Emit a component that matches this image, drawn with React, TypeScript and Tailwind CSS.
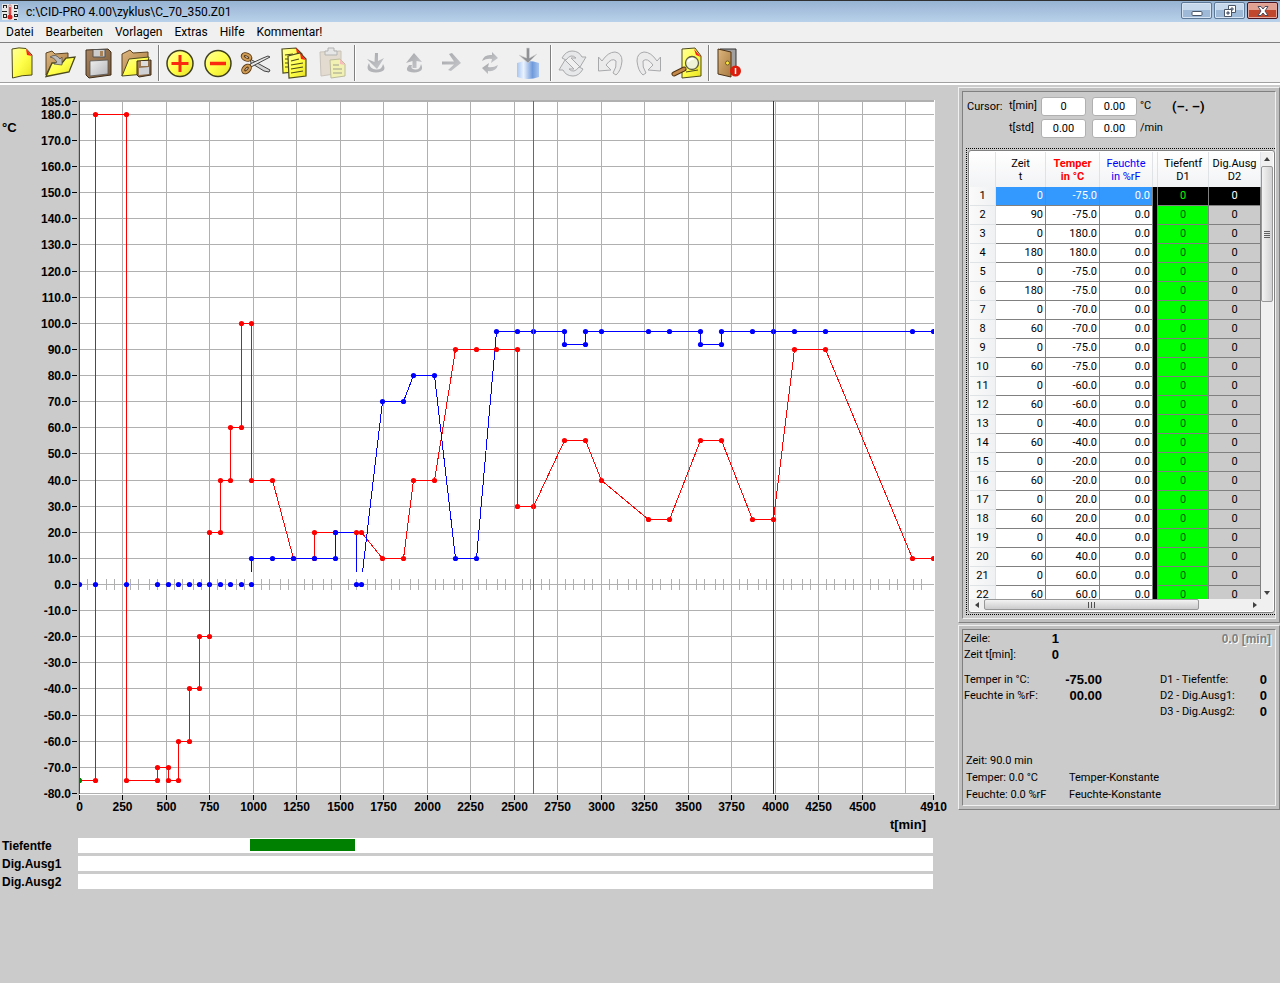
import React from 'react';

type Point = [number, number];

const MAX_T = 4910;

const temperature: Point[] = [
  [0, -75], [90, -75], [90, 180], [270, 180], [270, -75], [450, -75], [450, -70], [510, -70], [510, -75],
  [570, -75], [570, -60], [630, -60], [630, -40], [690, -40], [690, -20], [750, -20], [750, 20], [810, 20],
  [810, 40], [870, 40], [870, 60], [930, 60], [930, 100], [990, 100], [990, 40], [1110, 40], [1230, 10],
  [1350, 10], [1350, 20], [1470, 20], [1590, 20], [1620, 20], [1740, 10], [1860, 10], [1920, 40], [2040, 40],
  [2160, 90], [2280, 90], [2400, 90], [2520, 90], [2520, 30], [2610, 30], [2790, 55], [2910, 55], [3000, 40],
  [3270, 25], [3390, 25], [3570, 55], [3690, 55], [3870, 25], [3990, 25], [4110, 90], [4290, 90], [4790, 10],
  [4910, 10],
];

// humidity is only controlled above 5 %, so the curve comes in two pieces
const humidityA: Point[] = [[990, 10], [1110, 10], [1230, 10], [1350, 10], [1470, 10], [1470, 20]];
const humidityB: Point[] = [
  [1740, 70], [1860, 70], [1920, 80], [2040, 80], [2160, 10], [2280, 10], [2400, 97], [2520, 97], [2610, 97],
  [2790, 97], [2790, 92], [2910, 92], [2910, 97], [3000, 97], [3270, 97], [3390, 97], [3570, 97], [3570, 92],
  [3690, 92], [3690, 97], [3870, 97], [3990, 97], [4110, 97], [4290, 97], [4790, 97], [4910, 97],
];
const humidityOff: Point[] = [
  0, 90, 270, 450, 510, 570, 630, 690, 750, 810, 870, 930, 990, 1590, 1620,
].map((t) => [t, 0]);

const rows: [number, number][] = [
  [0, -75], [90, -75], [0, 180], [180, 180], [0, -75], [180, -75], [0, -70], [60, -70], [0, -75], [60, -75],
  [0, -60], [60, -60], [0, -40], [60, -40], [0, -20], [60, -20], [0, 20], [60, 20], [0, 40], [60, 40],
  [0, 60], [60, 60],
];

const tracks = [
  { name: 'Tiefentfe', on: [990, 1590] },
  { name: 'Dig.Ausg1', on: null },
  { name: 'Dig.Ausg2', on: null },
];

const px = (t: number) => Math.round(79 + (t * 854) / MAX_T) + 0.5;
const py = (v: number) => Math.round(498 - v * 2.612) + 0.5;
const toPath = (pts: Point[]) => pts.map(([t, v]) => `${px(t)},${py(v)}`).join(' ');

function Dots({ points, color }: { points: Point[]; color: string }) {
  return (
    <g fill={color} clipPath="url(#plot)">
      {points.map(([t, v], i) => (
        <circle key={i} cx={px(t)} cy={py(v)} r={2.6} />
      ))}
    </g>
  );
}

function Chart() {
  const yTicks = [185, 180];
  for (let v = 170; v >= -80; v -= 10) yTicks.push(v);
  const xGrid: number[] = [];
  for (let t = 250; t <= 4750; t += 250) xGrid.push(t);
  const xTicks = [0, ...xGrid.filter((t) => t < 4750), MAX_T];

  return (
    <svg
      viewBox="0 0 958 750"
      className="block h-auto w-full font-['Liberation_Sans',Arial,sans-serif] text-[12px] font-bold"
      role="img"
      aria-label="Temperatur und Feuchte"
    >
      <clipPath id="plot"><rect x="79" y="14" width="855" height="695" /></clipPath>
      <rect x="78" y="14" width="857" height="695" fill="#fff" />
      <g stroke="#b0b0b0" shapeRendering="crispEdges">
        {yTicks.map((v) => <line key={v} x1="79" x2="934" y1={py(v)} y2={py(v)} />)}
        {xGrid.map((t) => <line key={t} x1={px(t)} x2={px(t)} y1="15" y2="708" />)}
        {[0, ...xGrid.slice(0, -1), 4750].map((t) =>
          [8, 16, 27, 35].filter((d) => px(t) + d < 925).map((d) => (
            <line key={`${t}-${d}`} x1={px(t) + d} x2={px(t) + d} y1="493" y2="504" />
          )),
        )}
        <line x1="78" x2="934" y1="14.5" y2="14.5" />
        <line x1="78.5" x2="78.5" y1="14" y2="709" />
      </g>
      <g stroke="#000" shapeRendering="crispEdges">
        {yTicks.map((v) => <line key={v} x1="72" x2="77" y1={py(v)} y2={py(v)} />)}
        {xTicks.map((t) => <line key={t} x1={px(t)} x2={px(t)} y1="709" y2="714" />)}
      </g>
      <g textAnchor="end">
        {yTicks.map((v) => <text key={v} x="71" y={py(v) + 4}>{v.toFixed(1)}</text>)}
      </g>
      <g textAnchor="middle">
        {xTicks.map((t) => <text key={t} x={px(t)} y="725">{t}</text>)}
      </g>
      <text x="2" y="46" className="text-[13px]">°C</text>
      <text x="926" y="743" textAnchor="end" className="text-[13px]">t[min]</text>

      <g fill="none" shapeRendering="crispEdges">
        <line x1="79.5" x2="79.5" y1="15" y2="708" stroke="#008000" />
        <polyline points={toPath(temperature)} stroke="#f00" />
        <polyline points={`${px(990)},486 ${toPath(humidityA)} ${px(1590)},${py(20)} ${px(1590)},486`} stroke="#00f" />
        <polyline points={`362.5,486 ${toPath(humidityB)}`} stroke="#00f" />
      </g>
      <Dots points={temperature} color="#f00" />
      <Dots points={[...humidityA, ...humidityB, ...humidityOff]} color="#00f" />
      <rect x="79" y={py(-75) - 2.5} width="2" height="5" fill="#008000" />
      <g shapeRendering="crispEdges">
        <line x1={px(2610)} x2={px(2610)} y1="15" y2="708" stroke="#f0f" />
        <line x1={px(3990)} x2={px(3990)} y1="15" y2="708" stroke="#800080" />
      </g>
    </svg>
  );
}

/* ---------- toolbar icons, all drawn on a 38x40 cell ---------- */

const ink = '#4c4a1c';

const icons: Record<string, React.ReactNode> = {
  new: (
    <>
      <path d="M9 6 Q16 4 23 5.500 L29 12 V32 Q19 32 9.500 35 Z" fill="url(#yellow)" stroke={ink} />
      <path d="M23 6 L29 13 L24 12 Z" fill="#f22" />
    </>
  ),
  open: (
    <>
      <path d="M5 32 V10 L11 8 L14 11 L27 10 V18 L10 22 Z" fill="url(#tan)" stroke="#5b4323" />
      <path d="M5 33.500 L11 20 L21 20 L25 15 L34 14 L28 29 Z" fill="url(#yellow)" stroke={ink} strokeWidth="1.300" />
      <path d="M9 14 Q15 10 19 16 L21 14 L21 22 L13 21 L16 19 Q13 14 9 14 Z" fill="#bbb" stroke="#555" strokeWidth=".8" />
    </>
  ),
  save: (
    <>
      <path d="M7 7 L29 6 L32 9 V32 L10 35 L7 32 Z" fill="url(#brown)" stroke="#3d2d1b" />
      <path d="M14 6.500 H26 V14 H14 Z" fill="#ccc" stroke="#555" />
      <rect x="21" y="8" width="3" height="5" fill="#a8835a" />
      <path d="M11 18 L29 17 V31 L11 33 Z" fill="url(#silver)" stroke="#555" strokeWidth=".8" />
    </>
  ),
  saveAs: (
    <>
      <path d="M5 33 V11 L13 7 L16 10 L31 9 V18 L12 22 Z" fill="url(#tan)" stroke="#5b4323" />
      <path d="M5 33 L12 16 L32 14 L28 31 Z" fill="url(#yellow)" stroke={ink} />
      <path d="M20 18 L34 17 V32 L22 34 L20 32 Z" fill="url(#brown)" stroke="#3d2d1b" />
      <rect x="24" y="18" width="7" height="5" fill="#ddd" />
      <path d="M22 25 L32 24 V31 L22 32 Z" fill="#cfd1d4" />
    </>
  ),
  add: (
    <>
      <circle cx="19" cy="20.500" r="13" fill="url(#yellow)" stroke="#3f3f20" strokeWidth="1.500" />
      <path d="M10.500 20.500 H27.500 M19 12 V29" stroke="#fa2a10" strokeWidth="3" />
    </>
  ),
  remove: (
    <>
      <circle cx="19" cy="20.500" r="13" fill="url(#yellow)" stroke="#3f3f20" strokeWidth="1.500" />
      <path d="M11 20.500 H27" stroke="#fa2a10" strokeWidth="3.500" />
    </>
  ),
  cut: (
    <>
      <path d="M13 16 L33 27 L32 29 L27 28 L14 20 Z" fill="#d4d4d4" stroke="#444" />
      <path d="M14 24 L33 14 L31 13 L26 15 L13 21 Z" fill="#e6e6e6" stroke="#444" />
      <g fill="none" stroke="#5b3a16" strokeWidth="4">
        <ellipse cx="9.500" cy="14" rx="4" ry="2.500" transform="rotate(25 9.500 14)" />
        <ellipse cx="9.500" cy="26" rx="4" ry="2.500" transform="rotate(-45 9.500 26)" />
      </g>
      <g fill="none" stroke="#cf9c55" strokeWidth="2">
        <ellipse cx="9.500" cy="14" rx="4" ry="2.500" transform="rotate(25 9.500 14)" />
        <ellipse cx="9.500" cy="26" rx="4" ry="2.500" transform="rotate(-45 9.500 26)" />
      </g>
    </>
  ),
  copy: (
    <>
      <path d="M7 6 L21 5 L27 11 V28 L8 30 Z" fill="url(#yellow)" stroke={ink} strokeWidth="1.200" />
      <path d="M21 5 L27 12 L22 11 Z" fill="#f22" />
      <path d="M10 12 L18 11 M10 16 H13 M10 20 H13 M10 24 H13" stroke={ink} strokeWidth="1.200" />
      <path d="M13 13 L25 10 L31 16 V33 L14 35 Z" fill="url(#yellow)" stroke={ink} strokeWidth="1.200" />
      <path d="M25 10 L31 17 L26 16 Z" fill="#f22" />
      <path d="M16 18 L24 16 M16 22 L28 20 M16 26 L28 24 M16 30 L28 28" stroke={ink} strokeWidth="1.200" />
    </>
  ),
  paste: (
    <g opacity=".5">
      <path d="M7 9 L28 8 V30 L8 33 Z" fill="#d8c8b0" stroke="#a39684" />
      <path d="M12 12 V8 H15 V5 H21 V8 H24 V12 Z" fill="#ddd" stroke="#777" />
      <path d="M17 17 L27 16 L32 21 V33 L18 35 Z" fill="#f2f27a" stroke="#8a8a4a" />
      <path d="M27 16 L32 22 L27 21 Z" fill="#f88" />
      <path d="M20 22 H26 M20 26 H29 M20 30 H29" stroke="#8a8a4a" strokeWidth="1.300" />
    </g>
  ),
  loadDown: (
    <>
      <path d="M12 20 Q7 29 19 29.500 Q31 29 26 21 Q25 27 19 26.500 Q13 26 12 20 Z" fill="#b3b4b8" />
      <path d="M18 10 H21 V18 L27 15 L20 26 L10 16 L17.500 19 Z" fill="url(#gray)" />
    </>
  ),
  loadUp: (
    <>
      <path d="M14 22 Q8 29 19 29.500 Q30 29 26 21 Q25 27 20 26.500 Q15 26 17 22 Z" fill="#b3b4b8" />
      <path d="M19 10 L27 19 L21.500 18 V25 H17.500 V18 L11 20 Z" fill="url(#gray)" />
    </>
  ),
  next: <path d="M9 18.500 H21 L16 11 L19 10 L28 20 L18 28 L15 27 L21 21.500 H9 Z" fill="url(#gray)" />,
  cycle: (
    <>
      <path d="M11 18 Q13 11 21 12 V9 L27 15 L20 20 L21 16 Q16 15 11 18 Z" fill="url(#gray)" />
      <path d="M27 22 Q25 29 17 28 V31 L11 25 L18 20 L17 24 Q22 25 27 22 Z" fill="url(#gray)" />
    </>
  ),
  store: (
    <>
      <path d="M8 20 Q19 16 30 20 V34 Q19 38 8 34 Z" fill="url(#blue)" />
      <path d="M17.500 5 H20.500 V15 L28 11 L19 20 L10 12 L17.500 15 Z" fill="#8f9194" stroke="#d5d5d5" strokeWidth=".6" />
    </>
  ),
  refresh: (
    <g fill="#e7e8e9" stroke="#a8a9ab" strokeLinejoin="round">
      <path d="M9 15 Q13 8 19 8 Q26 8 29 14 H33 L27 24 L18 15 H23 Q18 10 13 17 Z" />
      <path d="M30 26 Q26 33 20 33 Q13 33 10 27 H6 L12 17 L21 26 H16 Q21 31 26 24 Z" />
    </g>
  ),
  undo: (
    <path
      d="M7.500 14 L11 18 Q17 9 24 9 Q31 10 31 18 Q30 28 25 32 L22 30 Q26 24 25 18 Q21 14 15 22 L20 27 L7.500 28 Z"
      fill="#ebebec" stroke="#a8a9ab" strokeLinejoin="round"
    />
  ),
  redo: (
    <path
      d="M31.500 14 L28 18 Q22 9 15 9 Q8 10 8 18 Q9 28 14 32 L17 30 Q13 24 14 18 Q18 14 24 22 L19 27 L31.500 28 Z"
      fill="#ebebec" stroke="#a8a9ab" strokeLinejoin="round"
    />
  ),
  preview: (
    <>
      <path d="M15 6 L28 5 L34 13 V33 L15 35 Z" fill="url(#yellow)" stroke={ink} />
      <path d="M27 6 L34 14 L29 12 Z" fill="#f22" />
      <path d="M19 29 L31 27" stroke={ink} />
      <path d="M7 31 L17 26" stroke="#50310f" strokeWidth="5" strokeLinecap="round" />
      <path d="M7 31 L17 26" stroke="#c4894a" strokeWidth="3" strokeLinecap="round" />
      <circle cx="25" cy="20" r="6.500" fill="#eef2d6" stroke="#5d5d45" strokeWidth="1.300" />
      <path d="M21 19 Q23 15 27 16" fill="none" stroke="#fff" strokeWidth="2" />
    </>
  ),
  exit: (
    <>
      <path d="M9 6 H25 V31 H9 Z" fill="#a0a0a0" stroke="#333" />
      <path d="M7 6 L20 9 V34 L7 31 Z" fill="url(#tan)" stroke="#4c3216" />
      <circle cx="16.500" cy="20" r="2" fill="#ffe640" stroke="#5a4a10" strokeWidth=".8" />
      <circle cx="24.500" cy="28" r="5.500" fill="#dd1c0c" />
      <path d="M24.500 25 V31" stroke="#fff" strokeWidth="1.500" />
    </>
  ),
};

const toolGroups = [
  [['new', 'Neu'], ['open', 'Öffnen'], ['save', 'Speichern'], ['saveAs', 'Speichern unter']],
  [['add', 'Einfügen'], ['remove', 'Löschen'], ['cut', 'Ausschneiden'], ['copy', 'Kopieren'], ['paste', 'Einsetzen']],
  [['loadDown', 'Laden'], ['loadUp', 'Senden'], ['next', 'Weiter'], ['cycle', 'Zyklus'], ['store', 'Ablegen']],
  [['refresh', 'Aktualisieren'], ['undo', 'Rückgängig'], ['redo', 'Wiederholen'], ['preview', 'Vorschau']],
  [['exit', 'Beenden']],
];

function Gradients() {
  return (
    <svg width="0" height="0" className="absolute" aria-hidden="true">
      <defs>
        <linearGradient id="yellow" x1="0" y1="0" x2="1" y2="1">
          <stop offset="0" stopColor="#ffffa0" /><stop offset=".5" stopColor="#ffff4a" /><stop offset="1" stopColor="#e6e022" />
        </linearGradient>
        <linearGradient id="tan" x1="0" y1="0" x2="1" y2="1">
          <stop offset="0" stopColor="#dcb67e" /><stop offset="1" stopColor="#a8793f" />
        </linearGradient>
        <linearGradient id="brown" x1="0" y1="0" x2="1" y2="1">
          <stop offset="0" stopColor="#a98560" /><stop offset="1" stopColor="#7a5a38" />
        </linearGradient>
        <linearGradient id="silver" x1="0" y1="0" x2="1" y2="1">
          <stop offset="0" stopColor="#efefef" /><stop offset="1" stopColor="#b4b6ba" />
        </linearGradient>
        <linearGradient id="gray" x1="0" y1="0" x2="1" y2="1">
          <stop offset="0" stopColor="#a4a5a9" /><stop offset="1" stopColor="#c9cacd" />
        </linearGradient>
        <linearGradient id="blue">
          <stop offset="0" stopColor="#a9c5ee" /><stop offset=".3" stopColor="#eaf3ff" /><stop offset=".7" stopColor="#6f9adb" /><stop offset="1" stopColor="#a9c6ef" />
        </linearGradient>
      </defs>
    </svg>
  );
}

function AppIcon() {
  return (
    <svg width="16" height="16" viewBox="0 0 16 16" aria-hidden="true">
      <rect width="16" height="16" fill="#e9e9e9" />
      <g fill="none" stroke="#222" shapeRendering="crispEdges">
        <path d="M1.500 4 V1.500 H4 V4 M0 7.500 H5 M1.500 10.500 H4.500 V13.500 H1.500 Z" />
        <path d="M12.500 1.500 H15 V4.500 H12.500 Z M12 7.500 H15 M12.500 10.500 H15 V12.500 H12.500 Z M12 15 H15" />
      </g>
      <path d="M7 1 H9 V10 H7 Z" fill="#fff" stroke="#b55" strokeWidth=".6" />
      <path d="M8 3 V12" stroke="#d22" strokeWidth="1.500" />
      <circle cx="8" cy="13" r="2.500" fill="#d22" />
    </svg>
  );
}

const winButton =
  'flex h-[17px] w-[31px] items-center justify-center rounded-[2px] border border-[#5d7796] bg-linear-to-b from-[#c5d8ec] from-50% to-[#9db9d7] to-50% shadow-[inset_0_0_0_1px_#d5e3f2]';

function TitleBar() {
  return (
    <header className="flex h-[22px] items-center border-t border-[#303030] bg-linear-to-b from-[#97b3d3] to-[#b9d1ea] pl-0.5 pr-0.5">
      <AppIcon />
      <h1 className="ml-2 flex-1 text-[12px] leading-4">c:\CID-PRO 4.00\zyklus\C_70_350.Z01</h1>
      <div className="flex gap-0.5 self-start pt-px">
        <button aria-label="Minimieren" className={winButton}>
          <svg width="12" height="12" viewBox="0 0 12 12"><rect x="1" y="6.500" width="10" height="4" rx="1" fill="#fff" stroke="#4a5568" /></svg>
        </button>
        <button aria-label="Wiederherstellen" className={winButton}>
          <svg width="14" height="12" viewBox="0 0 14 12" fill="#fff" stroke="#4a5568">
            <path fillRule="evenodd" d="M5.500 .5 H12.500 V7.500 H5.500 Z M8 3 V5 H10 V3 Z" />
            <path fillRule="evenodd" d="M1.500 4.500 H8.500 V11.500 H1.500 Z M4 7 V9 H6 V7 Z" />
          </svg>
        </button>
        <button
          aria-label="Schließen"
          className="flex h-[17px] w-[31px] items-center justify-center rounded-[2px] border border-[#4a1520] bg-linear-to-b from-[#e0a193] from-50% to-[#c0472c] to-50% shadow-[inset_0_0_0_1px_#e4a89c]"
        >
          <svg width="12" height="10" viewBox="0 0 12 10">
            <path d="M1 .5 H4 L6 3 L8 .5 H11 L8 5 L11 9.500 H8 L6 7 L4 9.500 H1 L4 5 Z" fill="#fff" stroke="#4a4a5c" />
          </svg>
        </button>
      </div>
    </header>
  );
}

function Toolbar() {
  return (
    <div className="flex h-[43px] items-start border-b-2 border-t border-b-white border-t-[#808080] bg-[#f0f0f0] pl-[3px] shadow-[inset_0_-1px_0_#a0a0a0]">
      {toolGroups.map((group, i) => (
        <div key={i} className="flex items-center">
          {i > 0 && <span className="ml-[3px] mr-px h-9 w-[2px] border-l border-[#808080] bg-white" />}
          {group.map(([id, label]) => (
            <button key={id} aria-label={label} className="h-10 w-[38px]">
              <svg width="38" height="40" viewBox="0 0 38 40">{icons[id]}</svg>
            </button>
          ))}
        </div>
      ))}
    </div>
  );
}

function Frame({ children }: { children: React.ReactNode }) {
  return (
    <section className="border border-b-[#808080] border-l-[#f0f0f0] border-r-[#808080] border-t-[#f0f0f0] bg-[#bfbfbf] p-[3px]">
      <div className="border border-b-[#f0f0f0] border-l-[#808080] border-r-[#f0f0f0] border-t-[#808080] bg-[#cbcbcb]">
        {children}
      </div>
    </section>
  );
}

function CursorRow({ label, first, second, unit, extra }: {
  label: string; first: string; second: string; unit: string; extra?: string;
}) {
  const input = 'h-[19px] w-[45px] rounded-[3px] border border-[#b0b0b0] bg-white text-center';
  return (
    <div className="flex items-center">
      <label htmlFor={label} className="w-8">{label}</label>
      <input id={label} defaultValue={first} className={input} />
      <input aria-label={unit} defaultValue={second} className={`ml-1.5 ${input}`} />
      <span className="ml-[3px] w-8">{unit}</span>
      {extra && <b className="text-[13px] leading-4">{extra}</b>}
    </div>
  );
}

function StepTable() {
  const head = 'border-r border-[#e0e3e6] bg-linear-to-b from-white to-[#f2f3f5] p-0 font-normal leading-[13px]';
  return (
    <table className="w-full table-fixed border-separate border-spacing-0">
      <colgroup>
        <col className="w-[26px]" />
        <col className="w-[50px]" />
        <col className="w-[54px]" />
        <col className="w-[53px]" />
        <col className="w-[5px]" />
        <col className="w-[51px]" />
        <col />
      </colgroup>
      <thead>
        <tr className="h-[35px]">
          <th className={head} />
          <th className={head}>Zeit<br />t</th>
          <th className={`${head} text-[#f00]`}><b>Temper<br />in °C</b></th>
          <th className={`${head} text-[#00f]`}>Feuchte<br />in %rF</th>
          <th className={head} />
          <th className={head}>Tiefentf<br />D1</th>
          <th className={head}>Dig.Ausg<br />D2</th>
        </tr>
      </thead>
      <tbody>
        {rows.map(([time, temp], i) => {
          const cell = i === 0
            ? 'h-[19px] border-b border-r border-[#808080] bg-[#3399ff] pr-0.5 text-right text-white'
            : 'h-[19px] border-b border-r border-[#808080] bg-white pr-0.5 text-right';
          return (
            <tr key={i}>
              <th className="border-b border-r border-[#e0e3e6] bg-linear-to-r from-[#fafafa] to-[#f0f1f3] font-normal">{i + 1}</th>
              <td className={cell}>{time}</td>
              <td className={cell}>{temp.toFixed(1)}</td>
              <td className={cell}>0.0</td>
              <td className="border-r border-[#808080] bg-black" />
              <td className={i === 0 ? 'border-b border-r border-[#808080] bg-black text-center text-[#0f0]' : 'border-b border-r border-[#808080] bg-[#0f0] text-center text-[#006000]'}>0</td>
              <td className={i === 0 ? 'border-b border-r border-[#808080] bg-black text-center text-white' : 'border-b border-r border-[#808080] bg-[#cbcbcb] text-center'}>0</td>
            </tr>
          );
        })}
      </tbody>
    </table>
  );
}

function Arrow({ d, label, className }: { d: string; label: string; className: string }) {
  return (
    <button aria-label={label} className={`flex items-center justify-center ${className}`}>
      <svg width="6" height="6" viewBox="0 0 6 6"><path d={d} fill="#404040" /></svg>
    </button>
  );
}

function StepGrid() {
  return (
    <div className="border-y border-l border-dotted border-black py-px pl-px">
      <div className="rounded-[3px] border border-[#808080] bg-white p-px">
        <div className="flex h-[447px]">
          <div className="min-w-0 flex-1 overflow-hidden"><StepTable /></div>
          <div className="flex w-3 flex-col bg-[#f0f0f0]">
            <Arrow label="Nach oben" d="M0 5 L3 1 L6 5 Z" className="h-3.5" />
            <div className="flex h-[136px] flex-col items-center justify-center gap-px rounded-[2px] border border-[#979797] bg-linear-to-r from-[#f3f3f3] to-[#d2d2d4]">
              {[0, 1, 2, 3].map((n) => <i key={n} className="h-px w-1.5 bg-[#606060]" />)}
            </div>
            <Arrow label="Nach unten" d="M0 1 L3 5 L6 1 Z" className="mt-auto h-3" />
          </div>
        </div>
        <div className="flex h-3 bg-[#f0f0f0]">
          <Arrow label="Nach links" d="M5 0 L1 3 L5 6 Z" className="w-3.5" />
          <div className="flex h-[11px] w-[215px] items-center justify-center gap-0.5 rounded-[2px] border border-[#979797] bg-linear-to-b from-[#f3f3f3] to-[#cbcbcd]">
            {[0, 1, 2].map((n) => <i key={n} className="h-1.5 w-px bg-[#505050]" />)}
          </div>
          <Arrow label="Nach rechts" d="M1 0 L5 3 L1 6 Z" className="ml-auto mr-3 w-3" />
        </div>
      </div>
    </div>
  );
}

function Info() {
  const big = "text-right font-['Liberation_Sans',Arial,sans-serif] text-[13px] font-bold";
  return (
    <div className="whitespace-nowrap pb-0.5 pl-px pt-px leading-4">
      <div className="flex">
        <span className="w-[76px]">Zeile:</span>
        <span className={`w-[19px] ${big}`}>1</span>
        <span className="ml-auto mr-1 font-['Liberation_Sans',Arial,sans-serif] text-[12px] font-bold text-[#808080] [text-shadow:1px_1px_0_#fff]">0.0 [min]</span>
      </div>
      <div className="flex">
        <span className="w-[76px]">Zeit t[min]:</span>
        <span className={`w-[19px] ${big}`}>0</span>
      </div>
      <div className="mt-[9px] flex justify-between pr-2">
        <dl className="grid grid-cols-[76px_62px] content-start">
          <dt>Temper in °C:</dt><dd className={big}>-75.00</dd>
          <dt>Feuchte in %rF:</dt><dd className={big}>00.00</dd>
        </dl>
        <dl className="grid grid-cols-[87px_20px]">
          <dt>D1 - Tiefentfe:</dt><dd className={big}>0</dd>
          <dt>D2 - Dig.Ausg1:</dt><dd className={big}>0</dd>
          <dt>D3 - Dig.Ausg2:</dt><dd className={big}>0</dd>
        </dl>
      </div>
      <div className="ml-0.5 mt-8 grid grid-cols-[103px_1fr] leading-[17px]">
        <span className="col-span-2">Zeit: 90.0 min</span>
        <span>Temper: 0.0 °C</span><span>Temper-Konstante</span>
        <span>Feuchte: 0.0 %rF</span><span>Feuchte-Konstante</span>
      </div>
    </div>
  );
}

export default function App() {
  return (
    <div className="flex min-h-screen flex-col bg-[#cbcbcb] font-['Roboto',sans-serif] text-black">
      <Gradients />
      <TitleBar />
      <nav className="flex h-5 items-center gap-3 bg-[#f0f0f0] pl-1.5 text-[12px] leading-4">
        {['Datei', 'Bearbeiten', 'Vorlagen', 'Extras', 'Hilfe', 'Kommentar!'].map((m) => (
          <button key={m}>{m}</button>
        ))}
      </nav>
      <Toolbar />
      <main className="flex flex-1 items-start">
        <div className="min-w-0 flex-1 pt-px">
          <Chart />
          <div className="mt-0.5 flex flex-col gap-[3px] font-['Liberation_Sans',Arial,sans-serif] text-[12px] font-bold leading-[15px]">
            {tracks.map((track) => (
              <div key={track.name} className="flex h-[15px]">
                <span className="w-[78px] pl-0.5 pt-px">{track.name}</span>
                <div className="mr-[25px] flex-1 bg-white pt-px">
                  {track.on && (
                    <div
                      className="h-3 bg-[#008000]"
                      style={{
                        marginLeft: `${(track.on[0] / MAX_T) * 100}%`,
                        width: `${((track.on[1] - track.on[0]) / MAX_T) * 100}%`,
                      }}
                    />
                  )}
                </div>
              </div>
            ))}
          </div>
        </div>
        <aside className="flex w-[322px] shrink-0 flex-col gap-0.5 pt-0.5 text-[11px]">
          <Frame>
            <div className="pb-[3px] pl-[3px] pt-[5px]">
              <div className="flex pl-px">
                <span className="w-[42px] pt-0.5">Cursor:</span>
                <div className="flex flex-col gap-[3px]">
                  <CursorRow label="t[min]" first="0" second="0.00" unit="°C" extra="(–. –)" />
                  <CursorRow label="t[std]" first="0.00" second="0.00" unit="/min" />
                </div>
              </div>
              <div className="mt-2.5"><StepGrid /></div>
            </div>
          </Frame>
          <Frame><Info /></Frame>
        </aside>
      </main>
    </div>
  );
}
